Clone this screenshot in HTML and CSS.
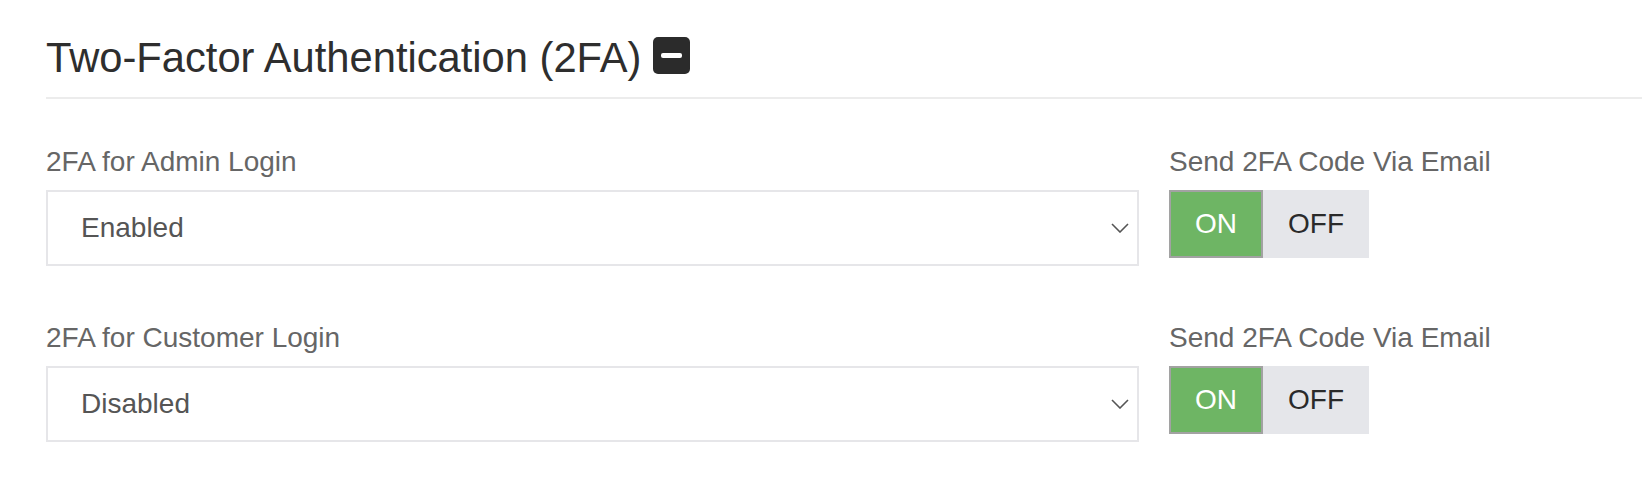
FILE: index.html
```html
<!DOCTYPE html>
<html lang="en">
<head>
<meta charset="utf-8">
<title>Two-Factor Authentication</title>
<link rel="stylesheet" href="styles.css">
</head>
<body>
<div class="page">
  <div class="section-head">
    <h2 class="section-title">Two-Factor Authentication (2FA)</h2>
    <button class="collapse-btn" aria-label="Collapse"><span class="collapse-bar"></span></button>
  </div>
  <div class="divider"></div>

  <div class="form-row">
    <div class="field">
      <label class="field-label">2FA for Admin Login</label>
      <div class="select">
        <span class="select-value">Enabled</span>
        <svg class="chevron" width="18" height="10" viewBox="0 0 18 10"><path d="M1 1 L9 9 L17 1" fill="none" stroke="#555" stroke-width="1.6"/></svg>
      </div>
    </div>
    <div class="field">
      <label class="field-label">Send 2FA Code Via Email</label>
      <div class="toggle">
        <span class="toggle-on">ON</span>
        <span class="toggle-off">OFF</span>
      </div>
    </div>
  </div>

  <div class="form-row">
    <div class="field">
      <label class="field-label">2FA for Customer Login</label>
      <div class="select">
        <span class="select-value">Disabled</span>
        <svg class="chevron" width="18" height="10" viewBox="0 0 18 10"><path d="M1 1 L9 9 L17 1" fill="none" stroke="#555" stroke-width="1.6"/></svg>
      </div>
    </div>
    <div class="field">
      <label class="field-label">Send 2FA Code Via Email</label>
      <div class="toggle">
        <span class="toggle-on">ON</span>
        <span class="toggle-off">OFF</span>
      </div>
    </div>
  </div>
</div>
</body>
</html>
```

FILE: styles.css
```css
* { box-sizing: border-box; }

html, body {
  margin: 0;
  padding: 0;
  background: #fff;
  font-family: "Liberation Sans", Arial, sans-serif;
  overflow: hidden;
}

.page {
  padding: 34px 0 0 46px;
}

.section-head {
  display: flex;
  align-items: center;
  height: 48px;
}

.section-title {
  margin: 0;
  font-size: 41.7px;
  line-height: 48px;
  font-weight: normal;
  color: #2e2e2e;
}

.collapse-btn {
  width: 37px;
  height: 37px;
  margin: 0 0 5px 12px;
  padding: 0;
  border: none;
  border-radius: 5px;
  background: #2b2b2b;
  display: flex;
  align-items: center;
  justify-content: center;
}

.collapse-bar {
  display: block;
  width: 21px;
  height: 5px;
  border-radius: 2px;
  background: #fff;
}

.divider {
  height: 2px;
  background: #ececec;
  margin-top: 15px;
}

.form-row {
  display: grid;
  grid-template-columns: 1093px 1fr;
  column-gap: 30px;
  margin-top: 47px;
}

.form-row + .form-row {
  margin-top: 56px;
}

.field {
  display: flex;
  flex-direction: column;
  align-items: flex-start;
}

.field-label {
  font-size: 28px;
  line-height: 32px;
  color: #666;
  margin-bottom: 12px;
}

.select {
  width: 100%;
  height: 76px;
  border: 2px solid #e6e6e9;
  background: #fff;
  display: flex;
  align-items: center;
  justify-content: space-between;
  padding: 0 8px 0 33px;
}

.select-value {
  font-size: 28px;
  color: #555;
  line-height: 32px;
}

.chevron {
  display: block;
}

.toggle {
  display: flex;
  height: 68px;
}

.toggle-on,
.toggle-off {
  display: flex;
  align-items: center;
  font-size: 28px;
  line-height: 32px;
}

.toggle-on {
  background: #6eb564;
  color: #fff;
  border: 2px solid #a2a2a2;
  padding: 0 24px;
}

.toggle-off {
  background: #e5e6ea;
  color: #2a2a2a;
  padding: 0 25px;
}
```
